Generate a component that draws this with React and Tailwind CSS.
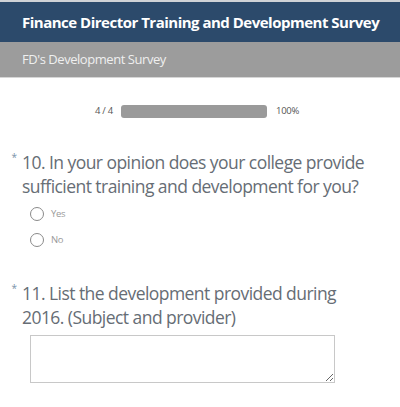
export default function App() {
  return (
    <div className="w-[400px] h-[407px] bg-white overflow-hidden font-['Open_Sans',sans-serif]">
      <div className="h-[2px] bg-[#cfd2d6]" />
      <div className="h-[40px] bg-[#2c4a6b] flex items-center px-[22px]">
        <h1 className="text-white font-bold text-[15px] tracking-[-0.5px] whitespace-nowrap">
          Finance Director Training and Development Survey
        </h1>
      </div>
      <div className="h-[36px] bg-[#9c9c9c] flex items-center px-[22px] border-b border-[#d6d6d6]">
        <span className="text-[#efefef] text-[13px] tracking-[-0.45px]">FD's Development Survey</span>
      </div>

      <div className="flex items-center pl-[95px] mt-[26px] h-[14px]">
        <span className="text-[#555] text-[9.5px] tracking-[-0.3px] w-[18px] whitespace-nowrap">4 / 4</span>
        <div className="ml-[8px] w-[146px] h-[13px] rounded-[3px] bg-[#9a9a9a]" />
        <span className="ml-[9px] text-[#555] text-[9.5px] tracking-[-0.3px]">100%</span>
      </div>

      <div className="mt-[32px] flex">
        <span className="shrink-0 w-[22px] text-right pr-[5px] text-[#7a92a8] text-[10px] leading-[10px] mt-[2px]">*</span>
        <p className="w-[355px] text-[#666d75] text-[17.5px] tracking-[-0.55px] leading-[24px]">
          10. In your opinion does your college provide sufficient training and development for you?
        </p>
      </div>

      <div className="mt-[9px] pl-[30px] flex flex-col gap-[12px]">
        <label className="flex items-center gap-[7px] h-[14px]">
          <span className="w-[14px] h-[14px] rounded-full border border-[#8a8a8a] bg-white" />
          <span className="text-[#9a9a9a] text-[9.5px] tracking-[-0.3px]">Yes</span>
        </label>
        <label className="flex items-center gap-[7px] h-[14px]">
          <span className="w-[14px] h-[14px] rounded-full border border-[#8a8a8a] bg-white" />
          <span className="text-[#9a9a9a] text-[9.5px] tracking-[-0.3px]">No</span>
        </label>
      </div>

      <div className="mt-[34px] flex">
        <span className="shrink-0 w-[22px] text-right pr-[5px] text-[#7a92a8] text-[10px] leading-[10px] mt-[2px]">*</span>
        <p className="w-[330px] text-[#666d75] text-[17.5px] tracking-[-0.55px] leading-[24px]">
          11. List the development provided during 2016. (Subject and provider)
        </p>
      </div>

      <div className="mt-[6px] pl-[30px]">
        <textarea className="block w-[305px] h-[48px] border border-[#c8c8c8] bg-white outline-none" />
      </div>
    </div>
  );
}
